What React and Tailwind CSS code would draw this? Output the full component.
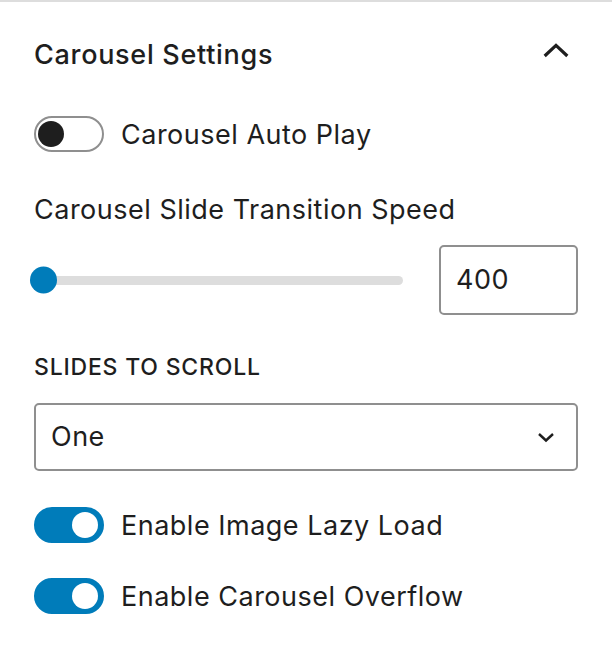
import React from 'react';

const font = { fontFamily: 'Inter, "Noto Sans", sans-serif' };

const Toggle = ({ on }) => (
  <span
    className={`relative inline-flex shrink-0 w-[70px] h-[36px] rounded-full border-2 ${
      on ? 'bg-[#007cba] border-[#007cba]' : 'bg-white border-[#8f8f8f]'
    }`}
  >
    <span
      className={`absolute top-[3px] w-[26px] h-[26px] rounded-full ${
        on ? 'right-[4px] bg-white' : 'left-[2px] bg-[#1e1e1e]'
      }`}
    />
  </span>
);

const ToggleRow = ({ on, label }) => (
  <div className="flex items-center gap-[17px] h-[36px]">
    <Toggle on={on} />
    <span className="text-[27px] tracking-[0.5px] leading-none text-[#1e1e1e]">{label}</span>
  </div>
);

export default function App() {
  return (
    <div className="w-[612px] h-[654px] bg-white text-[#1e1e1e]" style={font}>
      <div className="h-[2px] bg-[#dddddd]" />

      <div className="px-[34px]">
        {/* Panel header */}
        <div className="mt-[22px] h-[60px] flex items-center justify-between">
          <h2 className="text-[27px] tracking-[0.7px] font-medium leading-none">Carousel Settings</h2>
          <svg width="32" height="32" viewBox="0 0 24 24" className="mr-[6px]">
            <path d="M3.5 13.5 12 5.5l8.5 8" fill="none" stroke="#1e1e1e" strokeWidth="2.4" />
          </svg>
        </div>

        <div className="mt-[32px]">
          <ToggleRow on={false} label="Carousel Auto Play" />
        </div>

        {/* Range control */}
        <div className="mt-[41px] h-[32px] flex items-center text-[27px] tracking-[0.5px] leading-none">
          Carousel Slide Transition Speed
        </div>
        <div className="mt-[20px] flex items-center gap-[36px]">
          <div className="relative flex-1 h-[70px] flex items-center -ml-[4px]">
            <div className="w-full h-[9px] rounded-full bg-[#dddddd]" />
            <div className="absolute left-0 top-1/2 -translate-y-1/2 w-[27px] h-[27px] rounded-full bg-[#007cba]" />
          </div>
          <div className="w-[139px] h-[70px] border-2 border-[#8f8f8f] rounded-[5px] flex items-center pl-[15px] text-[27px] tracking-[0.5px]">
            400
          </div>
        </div>

        {/* Select */}
        <div className="mt-[38px] h-[28px] flex items-center text-[23px] tracking-[0.8px] font-medium uppercase leading-none">
          Slides to scroll
        </div>
        <div className="mt-[22px] h-[68px] border-2 border-[#8f8f8f] rounded-[5px] flex items-center justify-between pl-[15px] pr-[18px]">
          <span className="text-[27px] tracking-[0.5px]">One</span>
          <svg width="24" height="24" viewBox="0 0 24 24">
            <path d="M5 9l7 6.5L19 9" fill="none" stroke="#1e1e1e" strokeWidth="2.4" />
          </svg>
        </div>

        <div className="mt-[36px]">
          <ToggleRow on label="Enable Image Lazy Load" />
        </div>
        <div className="mt-[35px]">
          <ToggleRow on label="Enable Carousel Overflow" />
        </div>
      </div>
    </div>
  );
}
